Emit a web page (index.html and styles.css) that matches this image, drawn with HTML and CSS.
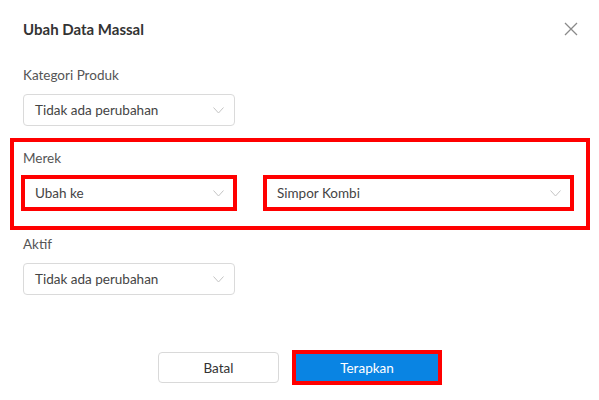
FILE: index.html
```html
<!DOCTYPE html>
<html lang="id">
<head>
<meta charset="utf-8">
<title>Ubah Data Massal</title>
<link rel="stylesheet" href="styles.css">
</head>
<body>
<div class="modal">
  <div class="header">
    <h1 class="title">Ubah Data Massal</h1>
    <svg class="close" width="14" height="14" viewBox="0 0 14 14"><path d="M1 1L13 13M13 1L1 13" stroke="#8a8a8a" stroke-width="1.3" fill="none"/></svg>
  </div>

  <div class="field first">
    <div class="label">Kategori Produk</div>
    <div class="select w-sm">
      <span>Tidak ada perubahan</span>
      <svg class="chev" width="11" height="7" viewBox="0 0 11 7"><path d="M0.5 0.5L5.5 6L10.5 0.5" stroke="#c4c4c4" stroke-width="1" fill="none"/></svg>
    </div>
  </div>

  <div class="field highlight">
    <div class="label">Merek</div>
    <div class="row">
      <div class="select w-sm focus marked">
        <span>Ubah ke</span>
        <svg class="chev" width="11" height="7" viewBox="0 0 11 7"><path d="M0.5 0.5L5.5 6L10.5 0.5" stroke="#c4c4c4" stroke-width="1" fill="none"/></svg>
      </div>
      <div class="select grow marked">
        <span>Simpor Kombi</span>
        <svg class="chev" width="11" height="7" viewBox="0 0 11 7"><path d="M0.5 0.5L5.5 6L10.5 0.5" stroke="#c4c4c4" stroke-width="1" fill="none"/></svg>
      </div>
    </div>
  </div>

  <div class="field after">
    <div class="label">Aktif</div>
    <div class="select w-sm">
      <span>Tidak ada perubahan</span>
      <svg class="chev" width="11" height="7" viewBox="0 0 11 7"><path d="M0.5 0.5L5.5 6L10.5 0.5" stroke="#c4c4c4" stroke-width="1" fill="none"/></svg>
    </div>
  </div>

  <div class="actions">
    <button class="btn btn-cancel">Batal</button>
    <button class="btn btn-primary marked">Terapkan</button>
  </div>
</div>
</body>
</html>
```

FILE: styles.css
```css
* { box-sizing: border-box; }
html, body { margin: 0; padding: 0; background: #fff; }
body {
  font-family: Lato, "Open Sans", sans-serif;
  font-size: 13.5px;
  color: #333;
  width: 599px;
  height: 400px;
  overflow: hidden;
}
.modal {
  padding: 0 22px 0 23px;
}
.header {
  height: 58px;
  display: flex;
  align-items: center;
  justify-content: space-between;
}
.title {
  margin: 0;
  font-size: 15px;
  font-weight: 700;
  color: #333;
  line-height: 20px;
}
.close { margin-right: -1px; }
.field { display: flex; flex-direction: column; align-items: flex-start; }
.first { margin-top: 7px; }
.label {
  line-height: 20px;
  color: #555;
}
.select {
  position: relative;
  margin-top: 9px;
  height: 32px;
  border: 1px solid #dadada;
  border-radius: 4px;
  padding: 0 10px 0 11px;
  display: flex;
  align-items: center;
  justify-content: space-between;
  color: #444;
  background: #fff;
}
.w-sm { width: 212px; }
.chev { flex: none; }
.highlight {
  margin: 12px -13px 0 -13px;
  border: 4px solid #ff0000;
  padding: 6px 14px 17px 9px;
  align-items: stretch;
}
.row { display: flex; gap: 30px; margin-top: 9px; }
.row .select { margin-top: 0; }
.grow { flex: 1; }
.focus { border-color: #a8d3f7; }
.marked::after {
  content: "";
  position: absolute;
  left: -4px;
  top: -4px;
  right: -4px;
  bottom: -4px;
  border: 4px solid #ff0000;
  pointer-events: none;
}
.row .marked::after { left: -3px; top: -3px; right: -3px; bottom: -3px; }
.after { margin-top: 4px; }
.after .select { margin-top: 9px; }
.actions {
  margin-top: 57px;
  display: flex;
  justify-content: center;
  gap: 15px;
  padding-right: 2px;
}
.btn {
  position: relative;
  font-family: inherit;
  font-size: 13.5px;
  height: 31px;
  border-radius: 4px;
  cursor: pointer;
}
.btn-cancel {
  width: 121px;
  background: #fff;
  border: 1px solid #d9d9d9;
  color: #333;
}
.btn-primary {
  width: 146px;
  background: #0984e3;
  border: 1px solid #0984e3;
  color: #fff;
}
.btn-primary.marked::after { left: -3px; top: -3px; right: -3px; bottom: -3px; }
```
